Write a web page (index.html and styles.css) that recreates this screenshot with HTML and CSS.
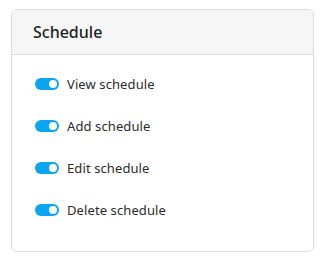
FILE: index.html
```html
<!DOCTYPE html>
<html lang="en">
<head>
    <meta charset="UTF-8">
    <meta name="viewport" content="width=device-width, initial-scale=1.0">
    <title>Schedule</title>
    <link rel="stylesheet" href="styles.css">
</head>
<body>
    <div class="card">
        <div class="card-header">Schedule</div>
        <div class="card-body">
            <label class="perm-row">
                <span class="switch on"><span class="knob"></span></span>
                View schedule
            </label>
            <label class="perm-row">
                <span class="switch on"><span class="knob"></span></span>
                Add schedule
            </label>
            <label class="perm-row">
                <span class="switch on"><span class="knob"></span></span>
                Edit schedule
            </label>
            <label class="perm-row">
                <span class="switch on"><span class="knob"></span></span>
                Delete schedule
            </label>
        </div>
    </div>
</body>
</html>
```

FILE: styles.css
```css
:root {
    --primary: #0aa5f0;
    --white: #FFFFFF;
    --border: #dcdcdc;
    --header-bg: #f6f6f6;
    --text: #2b2b2b;
}
body {
    margin: 0;
    padding: 9px 10px 0 11px;
    font-family: 'Noto Sans', 'Open Sans', Arial, sans-serif;
    background: var(--white);
    color: var(--text);
}
.card {
    height: 243px;
    box-sizing: border-box;
    border: 1px solid var(--border);
    border-radius: 6px;
    overflow: hidden;
    background: var(--white);
}
.card-header {
    height: 44px;
    display: flex;
    align-items: center;
    padding: 0 21px;
    background: var(--header-bg);
    border-bottom: 1px solid var(--border);
    font-size: 16px;
    font-weight: 500;
    color: #1e1e1e;
}
.card-body {
    display: flex;
    flex-direction: column;
    padding: 8px 23px;
}
.perm-row {
    height: 42px;
    display: flex;
    align-items: center;
    gap: 8px;
    font-size: 13px;
    letter-spacing: 0.1px;
    cursor: pointer;
}
.switch {
    width: 24px;
    height: 12px;
    border-radius: 6px;
    background: #c8c8c8;
    display: flex;
    align-items: center;
    padding: 0 2px;
    box-sizing: border-box;
}
.switch.on {
    background: var(--primary);
    justify-content: flex-end;
}
.knob {
    width: 8px;
    height: 8px;
    border-radius: 50%;
    background: var(--white);
}
```
